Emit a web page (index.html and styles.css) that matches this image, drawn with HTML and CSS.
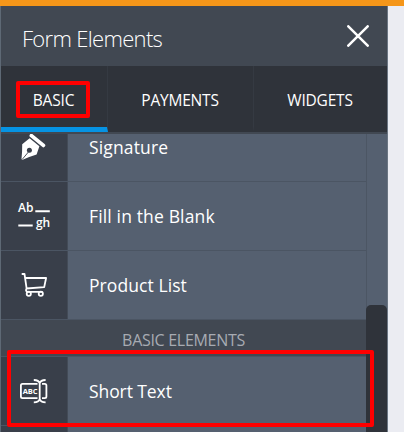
FILE: index.html
```
<!DOCTYPE html>
<html lang="en">
<head>
<meta charset="utf-8">
<title>Form Elements</title>
<link rel="stylesheet" href="styles.css">
</head>
<body>
<div class="topbar"></div>
<aside class="panel">
  <header class="header">
    <h1 class="title">Form Elements</h1>
    <svg class="close" width="22" height="22" viewBox="0 0 22 22"><path d="M1.3 1.3 20.7 20.7M20.7 1.3 1.3 20.7"/></svg>
  </header>
  <nav class="tabs">
    <div class="tab tab-basic"><span>BASIC</span></div>
    <div class="tab tab-payments"><span>PAYMENTS</span></div>
    <div class="tab tab-widgets"><span>WIDGETS</span></div>
  </nav>
  <div class="body">
    <div class="list">
      <div class="row row-cut">
        <div class="icon">
          <svg width="66" height="47" viewBox="1 134 66 47">
            <path class="fill" d="M29.6 138.2 39.4 146.2 36.6 154.6Q30 156.6 23.2 159.6Q21.8 160.2 21.5 159Q22.3 152 22.2 144.2Z"/>
            <circle class="hole" cx="29.4" cy="150.3" r="2.5"/>
            <path class="nib" d="M28.6 151.8 22 159.6"/>
            <path class="cap" d="M31.4 135.6 43.4 145.4"/>
          </svg>
        </div>
        <div class="label signature">Signature</div>
      </div>
      <div class="row">
        <div class="icon">
          <svg width="66" height="68" viewBox="1 182 66 68">
            <text class="blank" x="18" y="212" textLength="15.5">Ab</text>
            <text class="blank" x="36" y="227" textLength="14">gh</text>
            <path class="rule" d="M35.3 211.3H49.8M18.3 225.6H32.7"/>
          </svg>
        </div>
        <div class="label fill-blank">Fill in the Blank</div>
      </div>
      <div class="row">
        <div class="icon">
          <svg width="66" height="68" viewBox="1 251 66 68">
            <path class="line" d="M21.7 274H24.5L26.6 288.3M24.8 278H46.1L44.2 287.1 26.5 288.5Q25 291.8 28 291.8H42.5"/>
            <circle class="line" cx="28.8" cy="293.7" r="2.1"/>
            <circle class="line" cx="40.8" cy="293.7" r="2.1"/>
          </svg>
        </div>
        <div class="label product">Product List</div>
      </div>
      <div class="section">BASIC ELEMENTS</div>
      <div class="row">
        <div class="icon">
          <svg width="66" height="68" viewBox="1 357 66 68">
            <path class="line" d="M37.5 383.9H22.5Q20.9 383.9 20.9 385.5V396.5Q20.9 398.1 22.5 398.1H37.5M42 383.9H44.8Q46.4 383.9 46.4 385.5V396.5Q46.4 398.1 44.8 398.1H42"/>
            <path class="line" d="M39.7 382.5V399.5M33.8 380Q38.8 380 39.7 383.3Q40.6 380 45.6 380M33.8 402.3Q38.8 402.3 39.7 399Q40.6 402.3 45.6 402.3"/>
            <text class="abc" x="22.8" y="394" textLength="14.7">ABC</text>
          </svg>
        </div>
        <div class="label short">Short Text</div>
      </div>
      <div class="row">
        <div class="icon"></div>
        <div class="label"></div>
      </div>
    </div>
    <div class="scroll"><div class="thumb"></div></div>
  </div>
</aside>
<div class="mark mark-tab"></div>
<div class="mark mark-row"></div>
</body>
</html>
```
FILE: styles.css
```
* { box-sizing: border-box; }
body {
  margin: 0;
  height: 432px;
  overflow: hidden;
  position: relative;
  background: #ebecf2;
  font-family: "Open Sans", "Noto Sans", sans-serif;
  color: #fff;
}
svg { display: block; }
.topbar { height: 6px; background: #f59619; }
.panel {
  width: 388px;
  height: 426px;
  display: flex;
  flex-direction: column;
  background: #414852;
  border-left: 1px solid #5e6975;
  border-right: 1px solid #6b7683;
}
.header {
  height: 60px;
  flex: none;
  display: flex;
  align-items: center;
  justify-content: space-between;
  padding: 3px 18px 0 21px;
}
.title {
  margin: 0;
  font-size: 22px;
  line-height: 30px;
  font-weight: 300;
  letter-spacing: -0.68px;
}
.close path { stroke: #fff; stroke-width: 2.5; stroke-linecap: round; }
.close { margin-top: -4px; }
.tabs {
  height: 66px;
  flex: none;
  display: flex;
  background: #2f333a;
  font-size: 15.5px;
  letter-spacing: -0.2px;
}
.tab {
  display: flex;
  align-items: center;
  justify-content: center;
  border-right: 1px solid #353a42;
  border-bottom: 5px solid transparent;
  padding-top: 7px;
  line-height: 20px;
}
.tab-basic { width: 107px; border-bottom-color: #0693e3; }
.tab-payments { width: 146px; }
.tab-widgets { flex: 1; border-right: 0; }
.tab-basic span, .tab-payments span, .tab-widgets span { margin-right: 1px; }
.body { display: flex; flex: 1; min-height: 0; padding-top: 2px; }
.list { width: 366px; overflow: hidden; border-right: 1px solid #4c5664; }
.row { height: 69px; display: flex; border-bottom: 1px solid #4b5563; }
.row-cut { height: 48px; }
.icon { width: 67px; flex: none; background: #393f4a; border-right: 1px solid #434b57; }
.label {
  flex: 1;
  background: #556070;
  padding: 22px 0 0 21px;
  font-size: 17.5px;
  line-height: 24px;
  white-space: nowrap;
}
.fill-blank { letter-spacing: 0.15px; }
.signature { letter-spacing: 0.15px; }
.product { letter-spacing: 0.08px; }
.short { letter-spacing: -0.08px; }
.row-cut .label { padding-top: 1px; }
.section {
  height: 37px;
  padding-top: 9px;
  text-align: center;
  border-bottom: 1px solid #4b5563;
  color: #a7abb2;
  font-size: 16px;
  line-height: 22px;
  letter-spacing: -0.3px;
}
.scroll { flex: 1; background: #556070; padding-top: 171px; }
.thumb { height: 140px; margin-left: -1px; background: #2f333a; border-radius: 5px 5px 0 0; }
.fill { fill: #fff; }
.hole { fill: #393f4a; }
.nib { stroke: #393f4a; stroke-width: 0.9; }
.cap { stroke: #fff; stroke-width: 3.8; stroke-linecap: round; }
.blank { fill: #fff; font: 600 12px "Open Sans", sans-serif; }
.rule { stroke: #fff; stroke-width: 2; }
.line { fill: none; stroke: #fff; stroke-width: 1.8; stroke-linejoin: round; }
.abc { fill: #fff; font: 700 7.5px "Open Sans", sans-serif; }
.mark { position: absolute; border: 4px solid #f00; border-radius: 2px; }
.mark-tab { left: 16px; top: 81px; width: 74px; height: 37px; }
.mark-row { left: 7px; top: 350px; width: 367px; height: 77px; }
```
